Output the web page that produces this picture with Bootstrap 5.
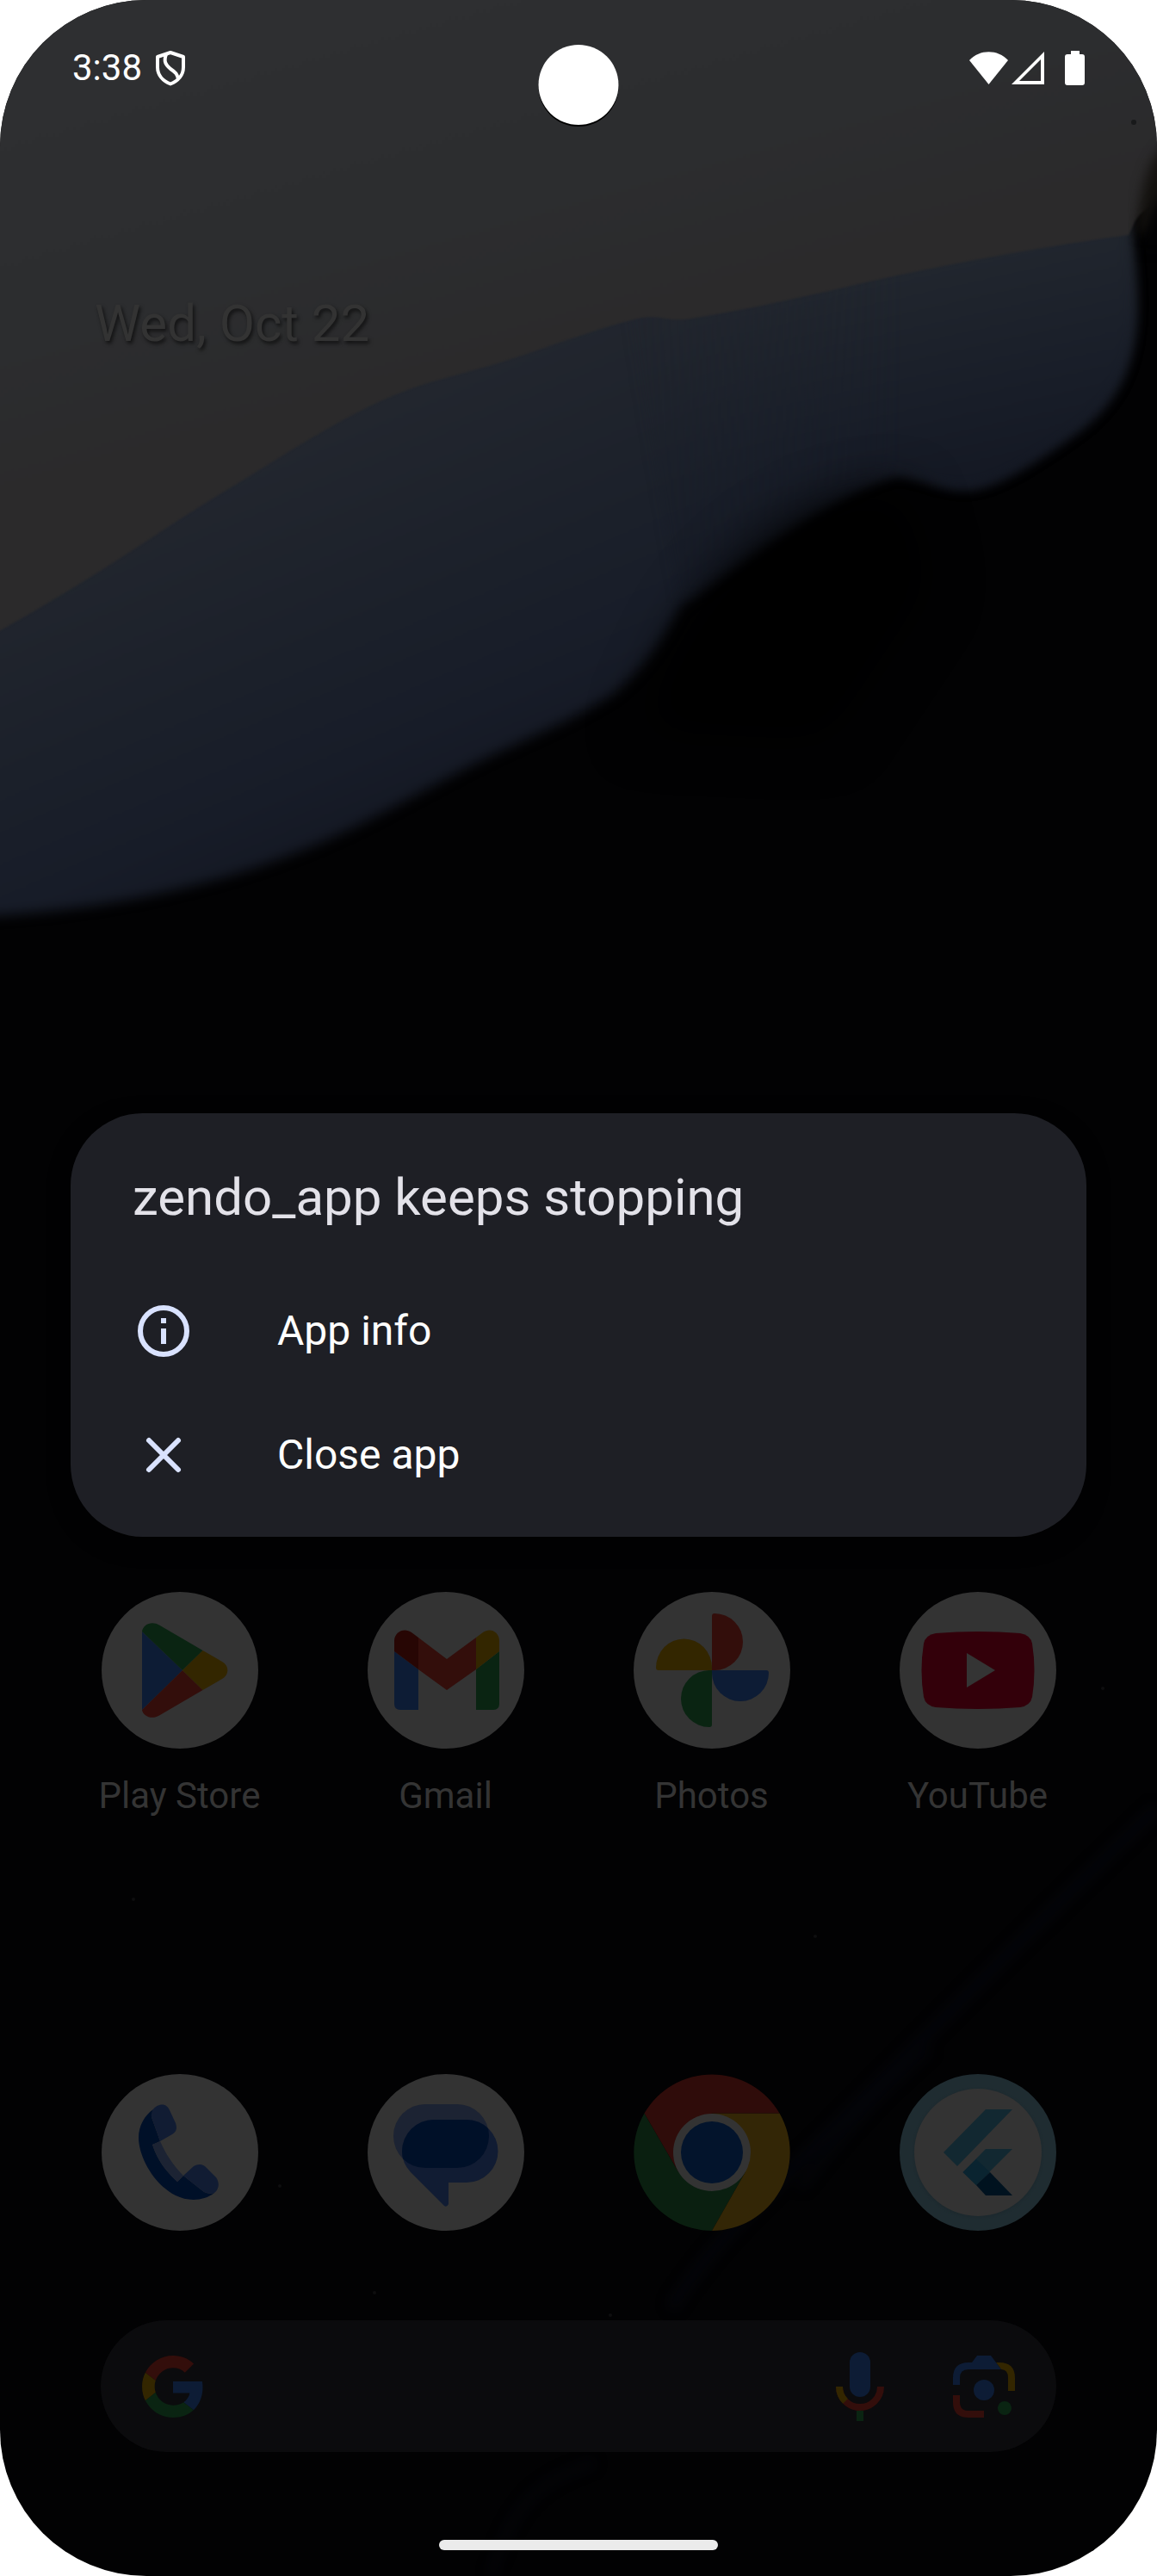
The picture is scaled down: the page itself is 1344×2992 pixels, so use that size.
<!DOCTYPE html>
<html lang="en">
<head>
<meta charset="utf-8">
<meta name="viewport" content="width=device-width, initial-scale=1">
<title>Home screen</title>
<link href="https://cdn.jsdelivr.net/npm/bootstrap@5.3.0/dist/css/bootstrap.min.css" rel="stylesheet">
<style>
  body { background: #fff; font-family: Roboto, "Noto Sans", sans-serif; }
  .screen { min-height: 100vh; background: #020203; border-radius: 170px; }
  .wallpaper { inset: 0; z-index: 0; }
  .wallpaper filter { color-interpolation-filters: sRGB; }
  .layer { z-index: 1; }
  .status-bar { height: 158px; padding: 0 84px; color: #fff; font-size: 42px; line-height: 48px; }
  .status-time { margin-right: 16px; }
  .status-battery { margin-left: 20px; }
  .camera { width: 93px; height: 93px; top: 52px; box-shadow: 0 2px 0 #000; }
  .date-line { margin-top: 182px; padding: 0 110px; color: #333; font-size: 60px; line-height: 72px; text-shadow: 2px 3px 4px rgba(0, 0, 0, .6); }
  .app-grid { padding: 0 54px; }
  .app-label { margin-top: 30px; color: #343434; font-size: 42px; line-height: 50px; }
  .dock { margin-top: 298px; }
  .search-pill { margin: 104px 117px 0; height: 153px; padding: 0 48px; background: #0b0b0d; }
  .search-pill input { min-width: 0; color: #555; font-size: 42px; outline: 0; }
  .voice-btn { margin-right: 68px; }
  .nav-handle { width: 324px; height: 12px; margin: 102px auto 30px; background: #ebebeb; }
  .dialog-layer { inset: 0; z-index: 2; padding: 86px 82px 0; }
  .crash-dialog { background: #1e1f25; border-radius: 84px; padding: 62px 0 23px; box-shadow: 0 8px 24px rgba(0, 0, 0, .5); }
  .crash-title { margin: 0 72px 47px; color: #e3e2e9; font-size: 60px; line-height: 72px; }
  .crash-action { height: 144px; padding: 0 72px; gap: 96px; color: #fff; font-size: 48px; line-height: 56px; }
</style>
<script src="https://cdn.jsdelivr.net/npm/bootstrap@5.3.0/dist/js/bootstrap.bundle.min.js"></script>
</head>
<body>
<main class="screen position-relative overflow-hidden d-flex flex-column">

  <!-- Wallpaper -->
  <svg class="wallpaper position-absolute w-100 h-100" viewBox="0 0 1344 2992" preserveAspectRatio="xMidYMin slice" aria-hidden="true">
    <defs>
      <linearGradient id="grey" gradientUnits="userSpaceOnUse" x1="500" y1="0" x2="620" y2="420">
        <stop offset="0" stop-color="#2e2f31"/><stop offset=".6" stop-color="#2c2d2f"/><stop offset="1" stop-color="#2b2a2b"/>
      </linearGradient>
      <linearGradient id="blue" gradientUnits="userSpaceOnUse" x1="420" y1="480" x2="600" y2="900">
        <stop offset="0" stop-color="#22262e"/><stop offset=".5" stop-color="#1b202a"/><stop offset=".8" stop-color="#171c28"/><stop offset="1" stop-color="#141823"/>
      </linearGradient>
      <linearGradient id="lobe" gradientUnits="userSpaceOnUse" x1="1120" y1="300" x2="1180" y2="570">
        <stop offset="0" stop-color="#21262e"/><stop offset=".6" stop-color="#181d28"/><stop offset="1" stop-color="#131722"/>
      </linearGradient>
      <linearGradient id="join" x1="0" x2="1" y1="0" y2="0">
        <stop offset="0" stop-color="#fff" stop-opacity="0"/><stop offset="1" stop-color="#fff"/>
      </linearGradient>
      <mask id="joinMask" maskUnits="userSpaceOnUse" x="700" y="200" width="644" height="500">
        <rect x="700" y="200" width="350" height="500" fill="url(#join)"/><rect x="1050" y="200" width="294" height="500" fill="#fff"/>
      </mask>
      <filter id="soft" x="-20%" y="-20%" width="140%" height="140%"><feGaussianBlur stdDeviation="7"/></filter>
      <filter id="softer" x="-50%" y="-50%" width="200%" height="200%"><feGaussianBlur stdDeviation="30"/></filter>
      <filter id="fine" x="-10%" y="-10%" width="120%" height="120%"><feGaussianBlur stdDeviation="1"/></filter>
    </defs>
    <path filter="url(#soft)" fill="url(#blue)" d="M-60 200H1306C1312 270 1320 330 1318 365C1316 430 1290 470 1250 500C1210 528 1165 560 1130 566C1095 570 1075 552 1040 550C960 575 870 645 790 705C770 745 745 780 712 806C660 840 600 862 540 893C470 930 410 965 350 988C260 1025 120 1062 -60 1066Z"/>
    <path filter="url(#soft)" mask="url(#joinMask)" fill="url(#lobe)" d="M700 200H1306C1312 270 1320 330 1318 365C1316 430 1290 470 1250 500C1210 528 1165 560 1130 566C1095 570 1075 552 1040 550C960 575 870 645 790 705Z"/>
    <path filter="url(#softer)" fill="#000" d="M1050 572C970 570 890 620 835 680C790 730 770 790 740 850L960 860L1080 680Z"/>
    <path filter="url(#fine)" fill="url(#grey)" d="M-10 -10H1354V240C1340 235 1325 245 1318 258L1311 273C1200 288 1110 306 1028 323C950 341 870 360 797 371C775 373 765 366 746 369C700 379 640 402 600 415C550 432 505 440 463 457C420 474 380 498 343 520C285 556 225 592 171 628C110 668 50 705 -10 738Z"/>
    <path filter="url(#soft)" fill="#14120f" d="M1370 160C1340 170 1326 200 1320 272H1370Z"/>
    <path filter="url(#soft)" fill="#020203" d="M1370 215C1345 225 1332 250 1326 290H1370Z"/>
    <circle cx="1317" cy="142" r="3" fill="#18191a"/>
    <g filter="url(#soft)" fill="none" stroke="#04050a">
      <path stroke-width="12" d="M1344 2100C1250 2190 1210 2230 1150 2290S1020 2420 960 2480S830 2600 780 2680"/>
      <path stroke-width="8" d="M1080 2380C1010 2440 960 2500 930 2540M690 2860C640 2880 600 2890 570 2992"/>
    </g>
    <g fill="#0e0e0f"><circle cx="947" cy="2249" r="2"/><circle cx="1281" cy="1961" r="2"/><circle cx="709" cy="2689" r="2"/><circle cx="155" cy="2206" r="2"/><circle cx="435" cy="2663" r="2"/><circle cx="325" cy="2539" r="2"/></g>
  </svg>

  <div class="camera layer position-absolute start-50 translate-middle-x bg-white rounded-circle"></div>

  <header class="status-bar layer d-flex align-items-center justify-content-between">
    <div class="d-flex align-items-center">
      <span class="status-time">3:38</span>
      <svg width="34" height="42" viewBox="0 0 34 42" fill="none" stroke="#fff" stroke-width="4" stroke-linejoin="round" role="img" aria-label="Security">
        <path d="M17 3L32 8V20C32 29 26 36 17 39.500C8 36 2 29 2 20V8Z"/>
        <path d="M12 5C9 13 11 17 17 22C23 26 25 28 26 34"/>
      </svg>
    </div>
    <div class="d-flex align-items-center gap-1">
      <svg width="45" height="38" viewBox="0 0 45 38" role="img" aria-label="Wi-Fi"><path fill="#fff" d="M0 10C12 -3 33 -3 45 10L22.500 38Z"/></svg>
      <svg width="38" height="38" viewBox="0 0 38 38" role="img" aria-label="No signal"><path fill="#fff" fill-rule="evenodd" d="M38 0V38H0ZM34 9L9 34H34Z"/></svg>
      <svg class="status-battery" width="23" height="40" viewBox="0 0 23 40" role="img" aria-label="Battery full"><path fill="#fff" d="M7 0H17V4H20Q23 4 23 7V37Q23 40 20 40H3Q0 40 0 37V7Q0 4 3 4H7Z"/></svg>
    </div>
  </header>

  <div class="date-line layer">Wed, Oct 22</div>

  <nav class="app-grid layer row row-cols-4 g-0 mt-auto text-center" aria-label="Apps">
    <a class="col d-flex flex-column align-items-center text-decoration-none" href="#play">
      <svg width="182" height="182" viewBox="0 0 182 182" aria-hidden="true">
        <circle cx="91" cy="91" r="91" fill="#333"/>
        <path fill="#0d1c35" d="M47 46L94 91L47 137Z"/>
        <path fill="#0a2412" d="M47 46C48 38 58 33 67 38.500L117.500 68L94 91Z"/>
        <path fill="#330e0b" d="M47 137C48 144 58 149 67 143.500L117.500 114L94 91Z"/>
        <path fill="#332600" d="M117.500 68L140 81C148.500 86 148.500 96 140 101L117.500 114L94 91Z"/>
      </svg>
      <span class="app-label">Play Store</span>
    </a>
    <a class="col d-flex flex-column align-items-center text-decoration-none" href="#gmail">
      <svg width="182" height="182" viewBox="0 0 182 182" aria-hidden="true">
        <circle cx="91" cy="91" r="91" fill="#333"/>
        <path fill="#0d1c35" d="M31 69L59 90V137H38Q31 137 31 130Z"/>
        <path fill="#0a2412" d="M153 69L126 90V137H146Q153 137 153 130Z"/>
        <path fill="#330e0b" d="M59 53L92 78L126 53V90L92 114L59 90Z"/>
        <path fill="#270604" d="M31 69V57C31 46 43 41 51 47L59 53V90Z"/>
        <path fill="#332600" d="M153 69V57C153 46 142 41 134 47L126 53V90Z"/>
      </svg>
      <span class="app-label">Gmail</span>
    </a>
    <a class="col d-flex flex-column align-items-center text-decoration-none" href="#photos">
      <svg width="182" height="182" viewBox="0 0 182 182" aria-hidden="true">
        <circle cx="91" cy="91" r="91" fill="#333"/>
        <path fill="#330e0b" d="M91 28Q91 25 94 25A33 33 0 0 1 94 91H91Z"/>
        <path fill="#332600" d="M29 91Q26 91 26 88A32 33 0 0 1 91 88V91Z"/>
        <path fill="#0d1c35" d="M154 91Q157 91 157 94A33 33 0 0 1 91 94V91Z"/>
        <path fill="#0a2412" d="M91 154Q91 157 88 157A33 33 0 0 1 88 91H91Z"/>
      </svg>
      <span class="app-label">Photos</span>
    </a>
    <a class="col d-flex flex-column align-items-center text-decoration-none" href="#youtube">
      <svg width="182" height="182" viewBox="0 0 182 182" aria-hidden="true">
        <circle cx="91" cy="91" r="91" fill="#333"/>
        <path fill="#33000a" d="M42 48Q91 44 140 48Q152 50 154 60Q159 91 154 122Q152 132 140 134Q91 138 42 134Q30 132 28 122Q23 91 28 60Q30 50 42 48Z"/>
        <path fill="#343434" d="M78 71L111 91L78 111Z"/>
      </svg>
      <span class="app-label">YouTube</span>
    </a>
  </nav>

  <nav class="app-grid dock layer row row-cols-4 g-0" aria-label="Dock">
    <a class="col d-flex justify-content-center" href="#phone" aria-label="Phone">
      <svg width="182" height="182" viewBox="0 0 182 182" aria-hidden="true">
        <circle cx="91" cy="91" r="91" fill="#333"/>
        <path fill="#001028" d="M60 41L58 50L68 78L59 82C65 100 74 112 88 125L95 118L119 137Q125 140 131 138C118 148 100 148 86 141C60 128 43 95 43 74C43 60 50 48 60 41Z"/>
        <path fill="#111c33" d="M60 41C64 35 75 32 79 42L86 57C88 63 87 67 82 70L68 78L58 50Q57 45 60 41Z"/>
        <path fill="#1c2333" d="M59 82L68 78C74 92 83 106 95 118L88 125C74 112 65 100 59 82Z"/>
        <path fill="#111c33" d="M95 118L107 107C112 104 118 104 122 109L133 120C137 126 137 133 131 138Q125 140 119 137Z"/>
      </svg>
    </a>
    <a class="col d-flex justify-content-center" href="#messages" aria-label="Messages">
      <svg width="182" height="182" viewBox="0 0 182 182" aria-hidden="true">
        <clipPath id="backBubble"><rect x="30" y="35" width="111" height="74" rx="37"/></clipPath>
        <circle cx="91" cy="91" r="91" fill="#333"/>
        <rect x="30" y="35" width="111" height="74" rx="37" fill="#1c2333"/>
        <path fill="#111c33" d="M77 53H115A36.500 36.500 0 0 1 115 126H94V151Q92 155 89 153L50 114Q40 103 40 90A37 37 0 0 1 77 53Z"/>
        <path fill="#001028" clip-path="url(#backBubble)" d="M77 53H115A36.500 36.500 0 0 1 115 126H94V151L50 114Q40 103 40 90A37 37 0 0 1 77 53Z"/>
      </svg>
    </a>
    <a class="col d-flex justify-content-center" href="#chrome" aria-label="Chrome">
      <svg width="182" height="182" viewBox="0 0 182 182" aria-hidden="true">
        <path fill="#0a1f10" d="M91 182A91 91 0 0 1 12.500 45.500L52 113.500H130Z"/>
        <path fill="#332606" d="M169.500 45.500A91 91 0 0 1 91 182L130 113.500L91 45.500Z"/>
        <path fill="#2f0c0a" d="M12.500 45.500A91 91 0 0 1 169.500 45.500H91L52 113.500Z"/>
        <circle cx="91" cy="91" r="45" fill="#333"/>
        <circle cx="91" cy="91" r="36" fill="#03142c"/>
      </svg>
    </a>
    <a class="col d-flex justify-content-center" href="#zendo" aria-label="zendo_app">
      <svg width="182" height="182" viewBox="0 0 182 182" aria-hidden="true">
        <circle cx="91" cy="91" r="91" fill="#1f2c31"/>
        <circle cx="91" cy="92" r="75" fill="#1d292e" filter="url(#fine)"/>
        <circle cx="91" cy="91" r="74" fill="#333"/>
        <path fill="#122831" d="M100 41H131L67 107L51 91ZM100 87H131L89 129L73.500 114Z"/>
        <path fill="#0a2430" d="M73.500 114L89 99L105 114L89 129Z"/>
        <path fill="#00121f" d="M105 114L131 141H100L89 129Z"/>
      </svg>
    </a>
  </nav>

  <form class="search-pill layer rounded-pill d-flex align-items-center" role="search">
    <svg class="flex-shrink-0" width="72" height="72" viewBox="0 0 48 48" aria-hidden="true">
      <path fill="#330e0b" d="M24 9.500c3.540 0 6.710 1.220 9.210 3.600l6.850-6.850C35.900 2.380 30.470 0 24 0 14.620 0 6.510 5.380 2.560 13.220l7.980 6.190C12.430 13.720 17.740 9.500 24 9.500z"/>
      <path fill="#0d1c35" d="M46.980 24.550c0-1.570-.15-3.090-.38-4.550H24v9.020h12.940c-.58 2.960-2.260 5.480-4.780 7.180l7.730 6c4.510-4.180 7.090-10.360 7.090-17.650z"/>
      <path fill="#332600" d="M10.530 28.590c-.48-1.450-.76-2.990-.76-4.590s.27-3.140.76-4.590l-7.980-6.190C.92 16.460 0 20.120 0 24c0 3.880.92 7.540 2.560 10.780l7.970-6.190z"/>
      <path fill="#0a2412" d="M24 48c6.480 0 11.930-2.130 15.890-5.810l-7.730-6c-2.150 1.450-4.920 2.300-8.160 2.300-6.260 0-11.570-4.220-13.470-9.910l-7.980 6.190C6.510 42.620 14.620 48 24 48z"/>
    </svg>
    <input class="flex-grow-1 bg-transparent border-0" type="text" aria-label="Search">
    <button class="voice-btn btn p-0 border-0 d-flex" type="button" aria-label="Voice search">
      <svg width="80" height="80" viewBox="0 0 80 80" aria-hidden="true">
        <rect x="28" width="24" height="52" rx="12" fill="#0d1c35"/>
        <path d="M16 40A24 24 0 0 0 64 40" fill="none" stroke="#330e0b" stroke-width="8"/>
        <path d="M16 40A24 24 0 0 0 23 57" fill="none" stroke="#332600" stroke-width="8"/>
        <rect x="36" y="68" width="8" height="12" fill="#0a2412"/>
      </svg>
    </button>
    <button class="btn p-0 border-0 d-flex" type="button" aria-label="Google Lens">
      <svg width="72" height="72" viewBox="0 0 72 72" aria-hidden="true">
        <path fill="#332600" d="M50 8H54Q72 8 72 26V41H64V26Q64 16 56 16Z"/>
        <path fill="#0d1c35" d="M0 34V26Q0 8 18 8H22L28 0H44L56 16H18Q8 16 8 26V34Z"/>
        <path fill="#330e0b" d="M0 46H8V54Q8 64 18 64H36V72H18Q0 72 0 54Z"/>
        <circle cx="36" cy="40" r="12" fill="#0d1c35"/>
        <circle cx="60" cy="61" r="8" fill="#0a2412"/>
      </svg>
    </button>
  </form>

  <div class="nav-handle layer rounded-pill"></div>

  <!-- Crash dialog -->
  <div class="dialog-layer position-absolute d-flex align-items-center">
    <section class="crash-dialog w-100" role="alertdialog" aria-labelledby="crashTitle">
      <h1 class="crash-title fw-normal" id="crashTitle">zendo_app keeps stopping</h1>
      <button class="crash-action btn border-0 rounded-0 w-100 d-flex align-items-center text-start" type="button">
        <svg width="72" height="72" viewBox="0 0 72 72" fill="none" stroke="#d9e2ff" stroke-width="6" aria-hidden="true">
          <circle cx="36" cy="36" r="27"/><path d="M36 33V51M36 21V27"/>
        </svg>
        App info
      </button>
      <button class="crash-action btn border-0 rounded-0 w-100 d-flex align-items-center text-start" type="button">
        <svg width="72" height="72" viewBox="0 0 72 72" fill="none" stroke="#d9e2ff" stroke-width="6" stroke-linecap="round" aria-hidden="true">
          <path d="M19 19L53 53M53 19L19 53"/>
        </svg>
        Close app
      </button>
    </section>
  </div>
</main>
</body>
</html>
